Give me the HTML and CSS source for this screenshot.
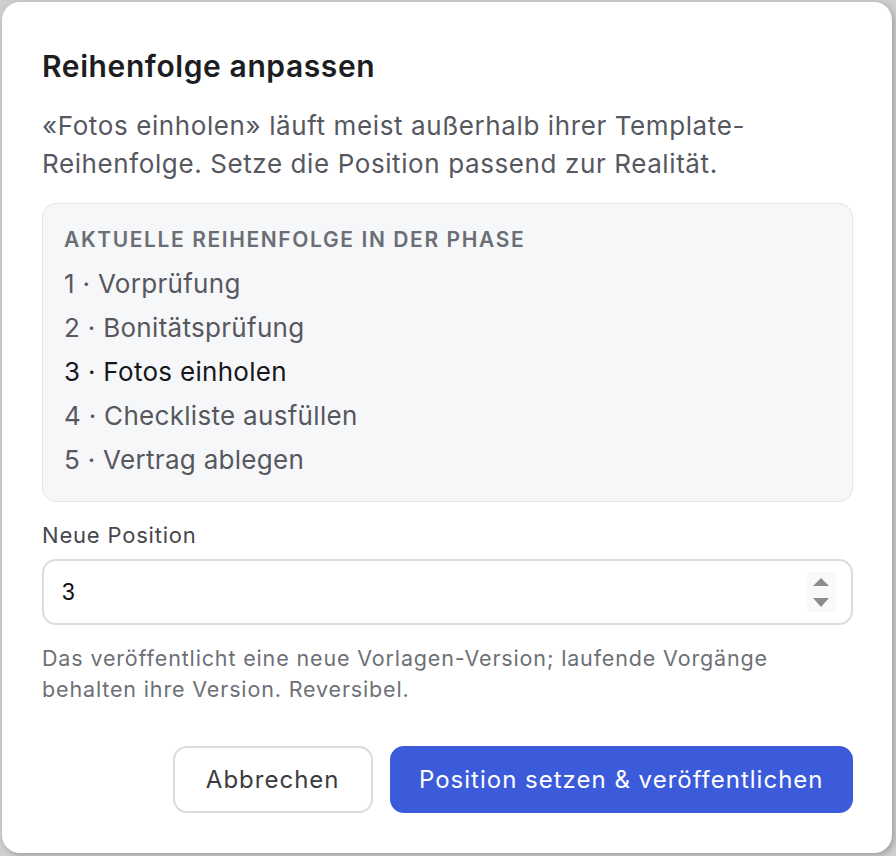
FILE: index.html
```html
<!DOCTYPE html>
<html lang="de">
<head>
  <meta charset="UTF-8">
  <title>Reihenfolge anpassen</title>
  <link rel="stylesheet" href="styles.css">
</head>
<body>
  <div class="dialog">
    <h2 class="dialog-title">Reihenfolge anpassen</h2>
    <p class="dialog-text">«Fotos einholen» läuft meist außerhalb ihrer Template-Reihenfolge. Setze die Position passend zur Realität.</p>

    <div class="order-box">
      <div class="order-head">Aktuelle Reihenfolge in der Phase</div>
      <div class="order-item">1 · Vorprüfung</div>
      <div class="order-item">2 · Bonitätsprüfung</div>
      <div class="order-item current">3 · Fotos einholen</div>
      <div class="order-item">4 · Checkliste ausfüllen</div>
      <div class="order-item">5 · Vertrag ablegen</div>
    </div>

    <label class="field-label" for="pos">Neue Position</label>
    <div class="field">
      <input id="pos" type="number" value="3" min="1" max="5">
      <span class="spinner">
        <svg width="29" height="40" viewBox="0 0 29 40">
          <path d="M6 14 L22 14 L14 6 Z" fill="#8c8c8c"/>
          <path d="M6 26 L22 26 L14 35 Z" fill="#8c8c8c"/>
        </svg>
      </span>
    </div>
    <p class="hint">Das veröffentlicht eine neue Vorlagen-Version; laufende Vorgänge behalten ihre Version. Reversibel.</p>

    <div class="actions">
      <button class="btn">Abbrechen</button>
      <button class="btn primary">Position setzen &amp; veröffentlichen</button>
    </div>
  </div>
</body>
</html>
```

FILE: styles.css
```css
html, body {
  margin: 0;
  height: 100%;
}
body {
  background-color: #cfcfcf;
  font-family: Inter, "Noto Sans", Arial, sans-serif;
  padding: 2px 4px 3px 2px;
  box-sizing: border-box;
}
.dialog {
  background-color: #fff;
  border-radius: 18px;
  padding: 40px 39px 40px 40px;
  height: 100%;
  box-sizing: border-box;
  box-shadow: 2px 2px 6px rgba(0,0,0,0.25);
}
.dialog-title {
  margin: 0;
  font-size: 30px;
  font-weight: 600;
  letter-spacing: 0.6px;
  color: #1c1d21;
  line-height: 48px;
}
.dialog-text {
  margin: 17px 0 20px;
  font-size: 26px;
  letter-spacing: 0.6px;
  line-height: 38px;
  color: #56585f;
}
.order-box {
  background-color: #f6f7f9;
  border: 1px solid #e3e5e8;
  border-radius: 14px;
  padding: 14px 21px 19px;
}
.order-head {
  font-size: 21px;
  font-weight: 600;
  letter-spacing: 1.6px;
  text-transform: uppercase;
  color: #6b6e75;
  line-height: 44px;
}
.order-item {
  font-size: 26px;
  letter-spacing: 0.3px;
  line-height: 44px;
  color: #56585e;
}
.order-item.current {
  color: #16171a;
}
.field-label {
  display: block;
  margin-top: 19px;
  font-size: 22px;
  letter-spacing: 0.8px;
  line-height: 28px;
  color: #45474d;
}
.field {
  position: relative;
  margin-top: 10px;
}
.field input {
  display: block;
  width: 100%;
  box-sizing: border-box;
  height: 66px;
  border: 2px solid #dcdcdc;
  border-radius: 14px;
  padding: 0 60px 0 18px;
  font-family: "Liberation Sans", Arial, sans-serif;
  font-size: 23px;
  color: #111;
  background: #fff;
  -moz-appearance: textfield;
}
.field input::-webkit-inner-spin-button,
.field input::-webkit-outer-spin-button {
  -webkit-appearance: none;
  margin: 0;
}
.spinner {
  position: absolute;
  right: 17px;
  top: 13px;
  width: 29px;
  height: 40px;
  background: #f9f9f9;
  display: flex;
}
.hint {
  margin: 18px 0 0;
  font-size: 21.5px;
  letter-spacing: 0.85px;
  line-height: 31px;
  color: #6d7077;
}
.actions {
  display: flex;
  justify-content: flex-end;
  gap: 17px;
  margin-top: 41px;
}
.btn {
  height: 67px;
  padding: 0 31px;
  border: 2px solid #dcdcdc;
  border-radius: 14px;
  background: #fff;
  font-family: inherit;
  font-size: 24px;
  letter-spacing: 1px;
  color: #3a3c42;
}
.btn.primary {
  padding: 0 27.5px;
  background: #3b5bdb;
  border-color: #3b5bdb;
  color: #fff;
}
```
